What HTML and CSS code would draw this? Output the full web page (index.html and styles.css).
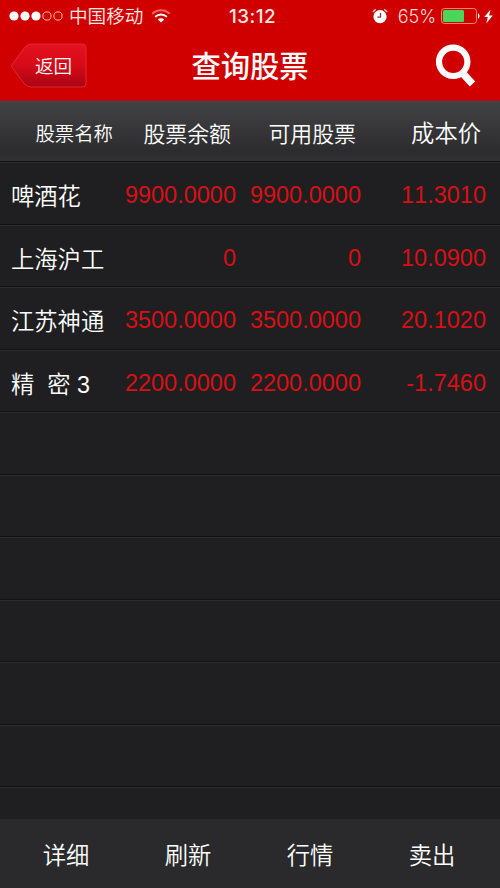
FILE: index.html
```html
<!DOCTYPE html>
<html lang="zh-CN">
<head>
    <meta charset="UTF-8">
    <meta name="viewport" content="width=device-width, initial-scale=1.0">
    <title>查询股票</title>
    <link rel="stylesheet" href="styles.css">
</head>
<body>
    <header>
        <div class="status-bar">
            <div class="status-left">
                <svg class="signal" width="54" height="12" viewBox="0 0 54 12">
                    <g fill="#fff">
                        <circle cx="5" cy="6" r="4.6"/>
                        <circle cx="16" cy="6" r="4.6"/>
                        <circle cx="27" cy="6" r="4.6"/>
                    </g>
                    <g fill="none" stroke="#ffb9b0" stroke-width="1">
                        <circle cx="38" cy="6" r="4.1"/>
                        <circle cx="49" cy="6" r="4.1"/>
                    </g>
                </svg>
                <span class="carrier">中国移动</span>
                <svg class="wifi" width="20" height="14" viewBox="0 0 20 14" fill="none" stroke-width="2">
                    <path d="M1.2 4.8C6-.1 14-.1 18.8 4.8" stroke="#f3675f"/>
                    <path d="M4.2 7.9c3.2-3.2 8.4-3.2 11.6 0" stroke="#fff"/>
                    <path d="M6.8 10.4c1.8-1.7 4.6-1.7 6.4 0L10 13.6z" fill="#fff"/>
                </svg>
            </div>
            <span class="time">13:12</span>
            <div class="status-right">
                <svg class="alarm" width="16" height="16" viewBox="0 0 16 16">
                    <circle cx="8" cy="8.7" r="6.6" fill="#fff"/>
                    <path d="M.8 4 3.8 1.2M15.2 4 12.2 1.2" stroke="#ffc9c2" stroke-width="1.3"/>
                    <path d="M8.5 5v4.1H5.4" fill="none" stroke="#7d3a38" stroke-width="1.3"/>
                </svg>
                <span class="percent">65%</span>
                <svg class="battery" width="39" height="16" viewBox="0 0 39 16">
                    <rect x=".5" y=".5" width="35" height="15" rx="3" fill="none" stroke="#f08a68"/>
                    <rect x="2" y="2" width="21" height="12" rx="1.5" fill="#4cd55b"/>
                    <path d="M37 5.5c2 .6 2 4.4 0 5z" fill="#fff"/>
                </svg>
                <svg class="bolt" width="9" height="15" viewBox="0 0 9 15">
                    <path d="M6.6.5.3 8.1h3.5L2.2 14.5 8.8 6.4H5.1z" fill="#fff"/>
                </svg>
            </div>
        </div>

        <div class="nav-bar">
            <button class="back-btn">
                <svg width="77" height="46" viewBox="0 0 77 46">
                    <defs>
                        <linearGradient id="backFill" x1="0" y1="0" x2="0" y2="1">
                            <stop offset="0" stop-color="#e5121f"/>
                            <stop offset=".5" stop-color="#d60a18"/>
                            <stop offset="1" stop-color="#a90413"/>
                        </linearGradient>
                    </defs>
                    <path d="M1 23 14.5 4.5Q17 1 21 1H72Q76 1 76 5V40Q76 44 72 44H21Q17 44 14.5 41Z" fill="url(#backFill)" stroke="#e23238" stroke-width=".8"/>
                </svg>
                <span>返回</span>
            </button>
            <h1>查询股票</h1>
            <button class="search-btn">
                <svg width="42" height="44" viewBox="0 0 42 44" fill="none" stroke="#fff">
                    <circle cx="18.2" cy="17.8" r="14.2" stroke-width="6.2"/>
                    <path d="M27 28.5 37.5 40" stroke-width="7.4"/>
                </svg>
            </button>
        </div>
    </header>

    <main>
        <div class="table-head">
            <span class="head-name">股票名称</span>
            <span class="head-amount">股票余额</span>
            <span class="head-amount">可用股票</span>
            <span class="head-cost">成本价</span>
        </div>

        <div class="row">
            <span class="name">啤酒花</span>
            <span>9900.0000</span>
            <span>9900.0000</span>
            <span>11.3010</span>
        </div>
        <div class="row">
            <span class="name">上海沪工</span>
            <span>0</span>
            <span>0</span>
            <span>10.0900</span>
        </div>
        <div class="row">
            <span class="name">江苏神通</span>
            <span>3500.0000</span>
            <span>3500.0000</span>
            <span>20.1020</span>
        </div>
        <div class="row">
            <span class="name spaced">精  密 3</span>
            <span>2200.0000</span>
            <span>2200.0000</span>
            <span>-1.7460</span>
        </div>
        <div class="row"></div>
        <div class="row"></div>
        <div class="row"></div>
        <div class="row"></div>
        <div class="row"></div>
        <div class="row"></div>
        <div class="row"></div>
    </main>

    <footer>
        <a>详细</a>
        <a>刷新</a>
        <a>行情</a>
        <a>卖出</a>
    </footer>
</body>
</html>
```
FILE: styles.css
```css
* {
    margin: 0;
    padding: 0;
    box-sizing: border-box;
}

body {
    display: flex;
    flex-direction: column;
    height: 100vh;
    overflow: hidden;
    background: #1f1f21;
    color: #fff;
    font-family: "Liberation Sans", "Noto Sans CJK SC", sans-serif;
    font-weight: 350;
    font-kerning: none;
}

header {
    flex: none;
    height: 101px;
    background: #d00000;
    border-bottom: 1px solid #a3161a;
}

/* status bar */
.status-bar {
    display: grid;
    grid-template-columns: 1fr auto 1fr;
    align-items: center;
    height: 32px;
    padding: 0 7px 0 9px;
}

.status-left,
.status-right {
    display: flex;
    align-items: center;
}

.status-right {
    justify-content: flex-end;
}

.carrier {
    margin: 0 8px 0 6px;
    padding-top: 2px;
    font-size: 18.6px;
    line-height: 30px;
    color: #ffe9e4;
}

.time {
    padding-left: 3px;
    font-family: Inter, "Liberation Sans", sans-serif;
    font-size: 18.8px;
    font-weight: 500;
    letter-spacing: 0.5px;
    color: #ffeae6;
}

.percent {
    margin: 0 5px 0 10px;
    font-family: Inter, "Liberation Sans", sans-serif;
    font-size: 18px;
    color: #ffdcd5;
}

.bolt {
    margin-left: 4px;
}

/* title bar */
.nav-bar {
    display: grid;
    grid-template-columns: 1fr auto 1fr;
    align-items: center;
    height: 68px;
    padding: 0 23px 0 10px;
}

button {
    border: none;
    background: none;
    color: #fff;
    font-family: inherit;
    font-weight: inherit;
}

.back-btn {
    display: grid;
    justify-self: start;
    align-items: center;
}

.back-btn svg,
.back-btn span {
    grid-area: 1 / 1;
}

.back-btn span {
    padding: 1px 0 0 10px;
    font-size: 18.6px;
    line-height: 26px;
}

h1 {
    padding: 2px 0 0 13px;
    font-size: 29.3px;
    font-weight: 500;
    line-height: 40px;
}

.search-btn {
    justify-self: end;
    height: 44px;
}

/* stock list */
main {
    flex: 1;
    overflow: hidden;
}

.table-head,
.row {
    display: grid;
    grid-template-columns: 1fr 125px 125px 125px;
    align-items: center;
    white-space: nowrap;
}

.table-head {
    height: 61px;
    padding: 2px 19px 0 0;
    background: linear-gradient(#434345, #2c2c2e 85%, #323234);
    border-bottom: 1px solid #101011;
    text-align: right;
}

.head-name {
    margin-right: -7px;
    font-size: 19.4px;
}

.head-amount {
    font-size: 21.9px;
}

.head-cost {
    font-size: 23.3px;
}

.row {
    height: 62.5px;
    padding: 5px 14px 0 11px;
    border-top: 1px solid #2c2c2e;
    border-bottom: 1px solid #111112;
    color: #d81015;
    font-size: 23.5px;
    text-align: right;
}

.name {
    padding-bottom: 1px;
    color: #fff;
    font-size: 23.3px;
    text-align: left;
}

.spaced {
    white-space: pre;
}

footer {
    display: grid;
    grid-template-columns: repeat(4, 122px);
    flex: none;
    height: 69px;
    padding-left: 5px;
    background: #2a2a2c;
    font-size: 23.3px;
    line-height: 74px;
    text-align: center;
}
```
